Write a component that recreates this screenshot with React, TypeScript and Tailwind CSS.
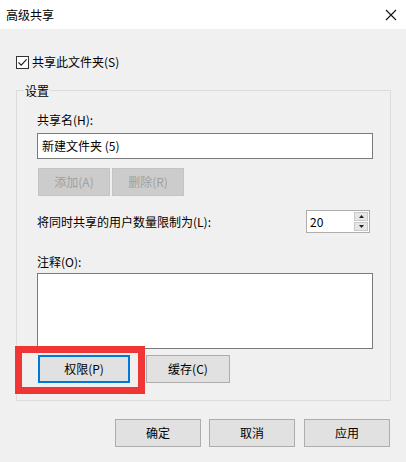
import React from "react";

const Btn = ({ children, className = "" }: { children: React.ReactNode; className?: string }) => (
  <div className={`h-[28px] flex items-center justify-center bg-[#e1e1e1] border border-[#adadad] text-[12px] text-black ${className}`}>
    {children}
  </div>
);

export default function App() {
  return (
    <div
      className="relative w-[406px] h-[462px] bg-[#f0f0f0] overflow-hidden text-[12px] leading-[16px] text-black"
      style={{ fontFamily: '"Microsoft YaHei UI", "Noto Sans CJK SC", "Noto Sans", sans-serif' }}
    >
      {/* title bar */}
      <div className="h-[29px] bg-white flex items-center justify-between pl-[6px] pr-[8px]">
        <span>高级共享</span>
        <svg width="12" height="12" viewBox="0 0 12 12" className="mr-[1px]">
          <path d="M1 1 L11 11 M11 1 L1 11" stroke="#111" strokeWidth="1.1" />
        </svg>
      </div>

      <div className="px-[16px]">
        {/* checkbox row */}
        <div className="mt-[26px] h-[14px] flex items-center gap-[3px]">
          <div className="w-[13px] h-[13px] border border-[#333] bg-white flex items-center justify-center">
            <svg width="11" height="11" viewBox="0 0 11 11">
              <path d="M1.5 5.5 L4.2 8.2 L9.6 2.3" stroke="#222" strokeWidth="1.2" fill="none" />
            </svg>
          </div>
          <span>共享此文件夹(S)</span>
        </div>

        {/* group box */}
        <div className="relative mt-[21px] w-[375px] border border-[#dcdcdc] pl-[20px] pt-[21px] pb-[17px]">
          <span className="absolute left-[7px] top-[-8px] px-[1px] bg-[#f0f0f0]">设置</span>
          <div className="h-[16px]">共享名(H):</div>
          <div className="mt-[5px] w-[336px] h-[26px] bg-white border border-[#7a7a7a] flex items-center pl-[4px]">
            新建文件夹 (5)
          </div>
          <div className="mt-[9px] ml-[1px] flex gap-[2px]">
            <div className="w-[72px] h-[28px] flex items-center justify-center bg-[#cccccc] border border-[#c4c4c4] text-[#a0a0a0]">
              添加(A)
            </div>
            <div className="w-[72px] h-[28px] flex items-center justify-center bg-[#cccccc] border border-[#c4c4c4] text-[#a0a0a0]">
              删除(R)
            </div>
          </div>
          <div className="mt-[14px] w-[336px] h-[23px] flex items-center justify-between">
            <span>将同时共享的用户数量限制为(L):</span>
            <div className="mr-[3px] w-[64px] h-[23px] bg-white border border-[#adadad] flex items-center justify-between">
              <span className="pl-[3px]">20</span>
              <div className="w-[15px] h-full flex flex-col gap-[1px] py-[1px] pr-[1px]">
                <div className="flex-1 bg-[#e6e6e6] border border-[#c9c9c9] flex items-center justify-center">
                  <svg width="5" height="3" viewBox="0 0 5 3"><path d="M0 3 L2.5 0 L5 3 Z" fill="#222" /></svg>
                </div>
                <div className="flex-1 bg-[#e6e6e6] border border-[#c9c9c9] flex items-center justify-center">
                  <svg width="5" height="3" viewBox="0 0 5 3"><path d="M0 0 L2.5 3 L5 0 Z" fill="#222" /></svg>
                </div>
              </div>
            </div>
          </div>
          <div className="mt-[21px] h-[16px]">注释(O):</div>
          <div className="mt-[3px] w-[336px] h-[76px] bg-white border border-[#7a7a7a]" />
          <div className="mt-[6px] ml-[1px] flex gap-[16px]">
            <div className="w-[92px] h-[28px] flex items-center justify-center bg-[#e1e1e1] border-2 border-[#0078d7]">
              权限(P)
            </div>
            <Btn className="w-[84px]">缓存(C)</Btn>
          </div>
        </div>

        {/* bottom buttons */}
        <div className="mt-[18px] flex justify-end">
          <Btn className="w-[86px]">确定</Btn>
          <Btn className="w-[86px] ml-[8px]">取消</Btn>
          <Btn className="w-[86px] ml-[9px]">应用</Btn>
        </div>
      </div>

      {/* red annotation box */}
      <div className="absolute left-[15px] top-[346px] w-[130px] h-[48px] border-[7px] border-[#f03535]" />
    </div>
  );
}
